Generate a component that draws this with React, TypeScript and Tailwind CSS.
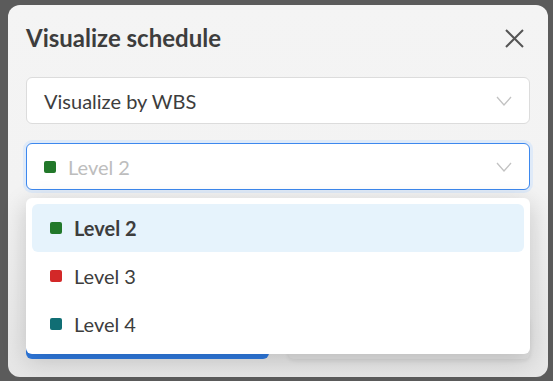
import React from 'react';

const levels = [
  { id: 'l2', label: 'Level 2', color: 'bg-[#22782a]', selected: true },
  { id: 'l3', label: 'Level 3', color: 'bg-[#d32828]', selected: false },
  { id: 'l4', label: 'Level 4', color: 'bg-[#106e74]', selected: false },
];

const Chevron = () => (
  <svg width="16" height="10" viewBox="0 0 16 10" fill="none" className="text-[#c2c2c2]">
    <path d="M1 1l7 8 7-8" stroke="currentColor" strokeWidth="1.3" />
  </svg>
);

const App: React.FC = () => {
  return (
    <div className="w-[553px] h-[381px] overflow-hidden bg-[#5b5b5b] pl-[8px] pt-[5px] font-['Lato','Noto_Sans',sans-serif]">
      <div className="relative w-[540px] h-[372px] rounded-[12px] bg-gradient-to-b from-[#f4f4f4] via-[#f3f3f3] to-[#e6e6e6] p-[18px] flex flex-col">
        {/* header */}
        <div className="h-[30px] flex items-center justify-between">
          <h2 className="text-[24px] font-bold text-[#3d3d3d] leading-none">Visualize schedule</h2>
          <button className="mr-[6px] text-[#555]">
            <svg width="19" height="19" viewBox="0 0 19 19" fill="none">
              <path d="M1 1l17 17M18 1L1 18" stroke="currentColor" strokeWidth="2" />
            </svg>
          </button>
        </div>

        <div className="mt-[24px] h-[47px] rounded-[6px] border border-[#dcdcdc] bg-white flex items-center justify-between pl-[17px] pr-[17px]">
          <span className="text-[20px] text-[#3d3d3d]">Visualize by WBS</span>
          <Chevron />
        </div>

        <div className="relative mt-[19px]">
          <div className="h-[47px] rounded-[6px] border border-[#3d88ee] ring-[3px] ring-[#dfeaf8] bg-white flex items-center justify-between pl-[17px] pr-[17px]">
            <div className="flex items-center gap-[12px]">
              <span className="w-[12px] h-[12px] rounded-[2px] bg-[#22782a]" />
              <span className="text-[20px] text-[#bdbdbd]">Level 2</span>
            </div>
            <Chevron />
          </div>

          {/* dropdown menu */}
          <div className="absolute z-10 left-0 right-0 top-[55px] rounded-[6px] bg-white p-[6px] shadow-[0_6px_24px_rgba(0,0,0,0.18)]">
            {levels.map((l) => (
              <div
                key={l.id}
                className={`h-[48px] rounded-[6px] flex items-center gap-[12px] pl-[18px] ${l.selected ? 'bg-[#e6f3fc]' : ''}`}
              >
                <span className={`w-[12px] h-[12px] rounded-[2px] ${l.color}`} />
                <span className={`text-[20px] text-[#3d3d3d] ${l.selected ? 'font-bold' : ''}`}>{l.label}</span>
              </div>
            ))}
          </div>
        </div>

        {/* footer buttons (mostly hidden) */}
        <div className="mt-auto flex gap-[19px]">
          <button className="flex-1 h-[44px] rounded-[6px] bg-[#2f7ae0]" />
          <button className="flex-1 h-[44px] rounded-[6px] bg-[#e2e2e2] shadow-[0_2px_4px_rgba(0,0,0,0.08)]" />
        </div>
      </div>
    </div>
  );
};

export default App;
